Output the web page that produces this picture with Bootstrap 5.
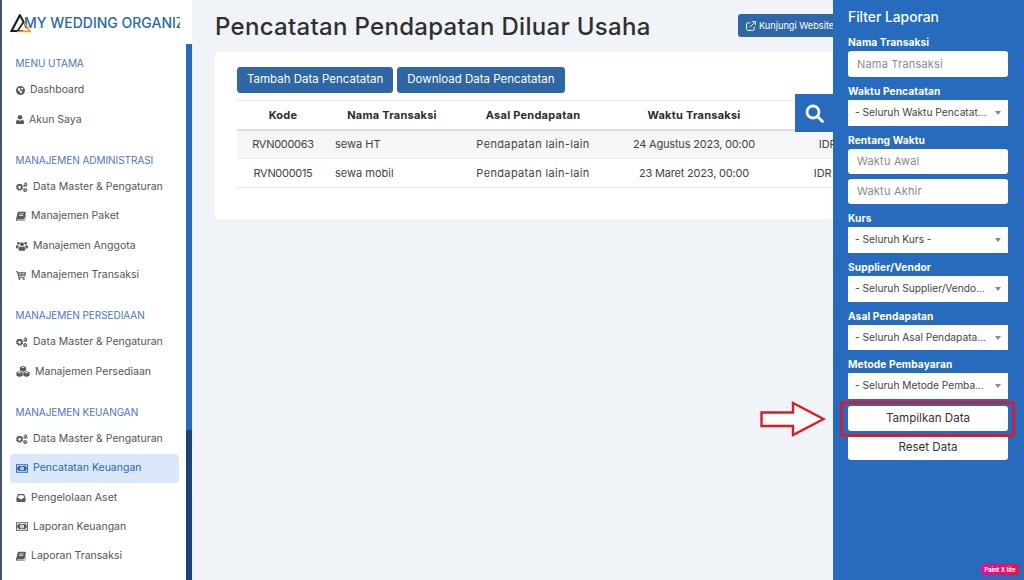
<!DOCTYPE html>
<html lang="en">
<head>
    <meta charset="UTF-8">
    <meta name="viewport" content="width=device-width, initial-scale=1.0">
    <title>Pencatatan Pendapatan Diluar Usaha</title>
    <link href="https://cdn.jsdelivr.net/npm/bootstrap@5.3.3/dist/css/bootstrap.min.css" rel="stylesheet">
    <script src="https://cdn.jsdelivr.net/npm/bootstrap@5.3.3/dist/js/bootstrap.bundle.min.js"></script>
    <style>
        html, body { height: 100%; overflow: hidden; }
        body { font-family: Inter, "Liberation Sans", sans-serif; font-size: 11px; color: #333; background: #f0f3f8; }
        .page-wrap { height: 580px; width: 1024px; position: relative; overflow: hidden; }

        .side-edge { width: 2px; background: #44546f; }
        .side-menu { width: 184px; background: #fff; }
        .side-track { width: 6px; background: #fff; padding-top: 44px; }
        .side-thumb { height: 386px; background: #266bbd; }
        .side-rest { background: #1c4474; }
        .brand-row { height: 44px; padding-left: 8px; overflow: hidden; }
        .brand-row svg { flex: none; margin-top: 1px; position: relative; z-index: 1; }
        .brand-text { font-size: 14px; font-weight: 500; color: #2a69a8; white-space: nowrap; overflow: hidden; width: 156px; margin-left: -7px; }
        .menu-head { height: 22.7px; line-height: 20.7px; padding-left: 13.5px; margin-top: 15.3px; color: #4c76c0; font-size: 10px; letter-spacing: -.05px; }
        .menu-head.first-head { margin-top: 9px; }
        .menu-item { height: 29.33px; margin: 0 7px 0 8px; padding-left: 6px; gap: 5px; border-radius: 4px; color: #555; font-size: 10.5px; text-decoration: none; }
        .menu-item svg { flex: none; fill: #5a5a5a; }
        .menu-item.on { background: #dbe7fb; color: #2a69a8; }
        .menu-item.on svg { fill: #2a69a8; }

        .main-area { min-width: 0; padding: 0 0 0 23px; }
        .title-row { height: 52px; width: 790px; }
        .page-title { font-size: 24px; font-weight: 500; color: #2f2f2f; margin: 2px 0 0; letter-spacing: .3px; white-space: nowrap; }
        .btn-site { height: 23px; width: 110px; margin-left: auto; margin-right: 157px; margin-top: -1px; padding: 0 0 0 8px; gap: 3px; background: #2f66a6; border: 0; border-radius: 3px; color: #fff; font-size: 9.2px; white-space: nowrap; overflow: hidden; }
        .data-box { width: 790px; height: 167px; background: #fff; border-radius: 4px; padding: 15px 22px; }
        .btn-blue { height: 26px; padding: 0 9px; background: #2f66a6; border: 1px solid #2f66a6; border-radius: 3px; color: #fff; font-size: 11.5px; white-space: nowrap; }
        .data-table { width: 745px; table-layout: fixed; margin: 7px 0 0; font-size: 11px; border-top: 1px solid #e9e9e9; }
        .data-table th, .data-table td { height: 29px; padding: 0 6px; vertical-align: middle; text-align: center; white-space: nowrap; overflow: hidden; border-bottom: 1px solid #e9e9e9; color: #444; }
        .data-table th { font-weight: 700; color: #2c2c2c; border-bottom: 2px solid #dedede; letter-spacing: .25px; }
        .data-table tbody tr:first-child td { background: #f6f6f6; }
        .data-table td.left-cell { text-align: left; }
        .data-table td:nth-child(1) { letter-spacing: -.3px; }
        .data-table td:nth-child(3) { letter-spacing: .35px; }
        .data-table td:nth-child(4) { letter-spacing: -.2px; }
        .w-kode { width: 92px; } .w-nama { width: 126px; } .w-asal { width: 156px; } .w-waktu { width: 166px; } .w-jumlah { width: 146px; }

        .search-tab { position: absolute; left: 795px; top: 94px; width: 38px; height: 38px; background: #266bbd; }
        .filter-panel { position: absolute; left: 833px; top: 0; width: 191px; height: 580px; background: #266bbd; padding: 7px 16px 0 15px; color: #fff; }
        .filter-title { font-size: 13.8px; font-weight: 500; line-height: 20px; margin-bottom: 8px; }
        .filter-label { display: block; font-size: 10.2px; font-weight: 700; line-height: 14px; margin: 0 0 2px; letter-spacing: .1px; color: #fff; }
        .filter-input { height: 25.75px; min-height: 0; border: 0; border-radius: 3px; font-size: 11px; padding: 0 9px; margin-bottom: 7px; }
        .filter-input.range-from { height: 25.25px; margin-bottom: 4.75px; }
        .filter-input.range-to { height: 25.25px; margin-bottom: 7.25px; }
        .filter-input::placeholder { color: #8a8a8a; letter-spacing: .2px; }
        .select-wrap { position: relative; margin-bottom: 7px; }
        .filter-select { display: block; width: 100%; height: 25.75px; border: 0; border-radius: 0; font-size: 10.2px; padding: 0 7px; background: #fff; color: #444; appearance: none; }
        .select-wrap::after { content: ""; position: absolute; right: 7px; top: 11px; border: 3.5px solid transparent; border-top: 4.5px solid #888; border-bottom: 0; }
        .btn-white { display: block; width: 100%; height: 25px; padding: 0; margin-bottom: 4px; background: #fff; border: 0; border-radius: 3px; color: #333; font-size: 11.6px; }
        .btn-white.first-btn { margin-top: 2.5px; }
        .red-box { position: absolute; left: 840px; top: 401px; width: 175px; height: 36px; border: 3px solid #cf1f35; border-radius: 2px; }
        .red-arrow { position: absolute; left: 760px; top: 401px; }
        .paint-tag { position: absolute; left: 981px; top: 564px; width: 38px; height: 11px; border-radius: 2px; background: linear-gradient(90deg, #e0109a, #ee1045); color: #fff; font-size: 6px; font-weight: 700; line-height: 11px; text-align: center; white-space: nowrap; }
    </style>
</head>
<body>
    <svg width="0" height="0" class="position-absolute">
        <symbol id="i-globe" viewBox="0 0 16 16"><path d="M8 0a8 8 0 1 0 0 16A8 8 0 0 0 8 0zm3.500 3l1.300 1.500-.6 2.200-2-.4-1.400-1.600L9.600 3zM4 4l2.500-1 1 1.200-.8 1.600L7.800 7.500l1.500 1.500 1.700.3-.5 2.200-1.800 2-1-.4-.3-2.800-2.300-1.300-1.800-2.800z" fill-rule="evenodd"/></symbol>
        <symbol id="i-user" viewBox="0 0 14 16"><circle cx="7" cy="4" r="4"/><path d="M3 8.500c1 1 2.500 1.500 4 1.500s3-.5 4-1.500c2 .3 3 2 3 4.500v1.500c0 1-.7 1.500-1.500 1.500h-11C.7 16 0 15.500 0 14.500V13c0-2.500 1-4.200 3-4.500z"/></symbol>
        <symbol id="i-cogs" viewBox="0 0 20 16"><path fill-rule="evenodd" d="M6.500 3l1 .5 1-1 1.600 1-.5 1.300.8 1 1.400-.1.400 1.900-1.300.5-.1 1.300 1.200.8-.8 1.700-1.300-.4-1 .9.200 1.400-1.800.4-.6-1.300H5.300l-.6 1.300-1.800-.5.200-1.400-1-.9-1.300.5-.8-1.700 1.200-.8-.1-1.300L-.2 7.600l.4-1.900 1.400.1.800-1L1.900 3.500l1.600-1 1 1zM6 6.200a2.300 2.300 0 1 0 0 4.600 2.300 2.300 0 0 0 0-4.600z"/><path fill-rule="evenodd" d="M16 0l.9.400-.2 1 .7.500 1-.3.500.9-.8.700.1.800 1 .4-.2 1-1 .1-.5.700.5 1-.9.500-.8-.7-.8.100-.5.900-1-.3.100-1-.6-.6-1 .2-.3-1 .9-.5v-.9l-.9-.6.400-.9 1 .2.600-.5L15 .1zm-.5 2.400a1.200 1.200 0 1 0 0 2.400 1.200 1.200 0 0 0 0-2.400zM16 9.500l.9.300-.1 1 .6.500 1-.2.400.9-.8.600.1.800.9.500-.3 1-1-.1-.6.700.3 1-.9.400-.7-.8h-.8l-.6.800-1-.4.200-1-.6-.6-1 .1-.3-1 .9-.5v-.8l-.8-.7.400-.9 1 .3.600-.5.100-1zm-.5 2.400a1.200 1.200 0 1 0 0 2.400 1.200 1.200 0 0 0 0-2.400z"/></symbol>
        <symbol id="i-book" viewBox="0 0 16 16"><path d="M4 1h10.500c1 0 1.500.7 1.300 1.600L13.500 12c-.3 1-1 1.500-2 1.500H2.500c-.7 0-1 .4-1 .8s.3.700 1 .7h10.300c.5 0 .8-.3 1-.8l2.200-9.200c.5.300.6.800.5 1.300l-2.100 8.600c-.2.800-.9 1.100-1.600 1.100H2.500C1 16 0 15 0 13.500c0-.3 0-.6.100-.9L2.500 3C2.800 1.700 3.200 1 4 1zm1.500 3l-.3 1H12l.3-1zm-.7 2.500l-.3 1h6.800l.3-1z" fill-rule="evenodd"/></symbol>
        <symbol id="i-users" viewBox="0 0 20 16"><circle cx="10" cy="5" r="3.200"/><circle cx="4" cy="3.500" r="2.300"/><circle cx="16" cy="3.500" r="2.300"/><path d="M5.500 9.500c.8-.7 1.200-.8 2-.6.700.4 1.500.6 2.500.6s1.800-.2 2.500-.6c.8-.2 1.200-.1 2 .6 1 1 1.300 2.500 1.300 4 0 1.500-1 2.500-2.300 2.500H6.500c-1.300 0-2.300-1-2.300-2.500 0-1.500.3-3 1.300-4z"/><path d="M3.800 7c.2 1 .7 1.500 1.200 1.800C3.800 9.600 3.300 11 3.200 12H1.500C.5 12 0 11.300 0 10.300 0 8.500.5 6.500 1.500 6.500c.7.400 1.500.6 2.300.5zM16.200 7c-.2 1-.7 1.500-1.200 1.800 1.200.8 1.700 2.200 1.800 3.200h1.700c1 0 1.500-.7 1.500-1.700 0-1.800-.5-3.800-1.500-3.800-.7.400-1.500.6-2.300.5z"/></symbol>
        <symbol id="i-cart" viewBox="0 0 16 16"><path fill-rule="evenodd" d="M0 2h3l.4 1.500H16l-1 6.500H5.200l.3 1.500H14V13H4L2 3.500H0zm4.700 3l.2 1h3V5zm4.300 0v1h4.600l.1-1zM5.100 7l.2 1.500H8V7zM9 7v1.500h4.300l.2-1.500z"/><circle cx="5.500" cy="14.500" r="1.500"/><circle cx="12.500" cy="14.500" r="1.500"/></symbol>
        <symbol id="i-cubes" viewBox="0 0 20 16"><path d="M10 0l4.500 1.700v5L10 8.500 5.500 6.700v-5zM7.500 2.300L10 3.300l2.500-1L10 1.300z" fill-rule="evenodd"/><path d="M5 7.500l4.500 1.700v5L5 16 .5 14.200v-5zM2.500 9.800L5 10.800l2.500-1L5 8.800z" fill-rule="evenodd"/><path d="M15 7.500l4.500 1.700v5L15 16l-4.500-1.800v-5zm-2.500 2.300l2.500 1 2.500-1-2.500-1z" fill-rule="evenodd"/></symbol>
        <symbol id="i-money" viewBox="0 0 20 14"><path fill-rule="evenodd" d="M0 0h20v14H0zm1.500 1.500v11h17v-11zM4 3h12c0 1.100.9 2 2 2v4c-1.100 0-2 .9-2 2H4c0-1.100-.9-2-2-2V5c1.100 0 2-.9 2-2zm6 .7a3.300 3.300 0 1 0 0 6.600 3.300 3.300 0 0 0 0-6.600z"/><path d="M9 5.500l1.500-.5v4H9.300V6.300L9 6.400z"/></symbol>
        <symbol id="i-inbox" viewBox="0 0 16 14"><path fill-rule="evenodd" d="M3.500 0h9c.6 0 1 .3 1.300.8L16 7v5.500c0 .8-.7 1.500-1.500 1.500h-13C.7 14 0 13.300 0 12.500V7L2.200.8C2.500.3 2.900 0 3.500 0zm.3 2L2 7h3l1 2h4l1-2h3l-1.800-5z"/></symbol>
        <symbol id="i-ext" viewBox="0 0 16 16"><path fill="none" stroke="#fff" stroke-width="1.500" d="M13 9v4.500c0 .8-.7 1.500-1.500 1.500h-9C1.700 15 1 14.300 1 13.500v-9C1 3.700 1.700 3 2.500 3H7M6 10l8-8M9.500 1H15v5.500"/></symbol>
    </svg>

    <div class="page-wrap d-flex">
        <div class="side-edge"></div>
        <nav class="side-menu flex-shrink-0">
            <div class="brand-row d-flex align-items-center">
                <svg width="21" height="20" viewBox="0 0 21 20">
                    <path d="M10 2L1.500 18H13" fill="none" stroke="#1d1d1d" stroke-width="2.200"/>
                    <path d="M9.500 1.500L17 15" fill="none" stroke="#1d1d1d" stroke-width="2"/>
                    <path d="M7 18.300H20L13.500 9" fill="none" stroke="#e0a32e" stroke-width="1.800"/>
                    <path d="M13.500 9L7.500 18" fill="none" stroke="#1d1d1d" stroke-width="1.600"/>
                </svg>
                <span class="brand-text">MY WEDDING ORGANIZER</span>
            </div>
            <div class="menu-head first-head">MENU UTAMA</div>
            <a class="menu-item d-flex align-items-center" href="#"><svg width="9" height="9"><use href="#i-globe"/></svg><span>Dashboard</span></a>
            <a class="menu-item d-flex align-items-center" href="#"><svg width="8" height="9"><use href="#i-user"/></svg><span>Akun Saya</span></a>

            <div class="menu-head">MANAJEMEN ADMINISTRASI</div>
            <a class="menu-item d-flex align-items-center" href="#"><svg width="12" height="10"><use href="#i-cogs"/></svg><span>Data Master &amp; Pengaturan</span></a>
            <a class="menu-item d-flex align-items-center" href="#"><svg width="10" height="10"><use href="#i-book"/></svg><span>Manajemen Paket</span></a>
            <a class="menu-item d-flex align-items-center" href="#"><svg width="12" height="10"><use href="#i-users"/></svg><span>Manajemen Anggota</span></a>
            <a class="menu-item d-flex align-items-center" href="#"><svg width="10" height="10"><use href="#i-cart"/></svg><span>Manajemen Transaksi</span></a>

            <div class="menu-head">MANAJEMEN PERSEDIAAN</div>
            <a class="menu-item d-flex align-items-center" href="#"><svg width="12" height="10"><use href="#i-cogs"/></svg><span>Data Master &amp; Pengaturan</span></a>
            <a class="menu-item d-flex align-items-center" href="#"><svg width="14" height="11"><use href="#i-cubes"/></svg><span>Manajemen Persediaan</span></a>

            <div class="menu-head">MANAJEMEN KEUANGAN</div>
            <a class="menu-item d-flex align-items-center" href="#"><svg width="12" height="10"><use href="#i-cogs"/></svg><span>Data Master &amp; Pengaturan</span></a>
            <a class="menu-item on d-flex align-items-center" href="#"><svg width="12" height="9"><use href="#i-money"/></svg><span>Pencatatan Keuangan</span></a>
            <a class="menu-item d-flex align-items-center" href="#"><svg width="10" height="8"><use href="#i-inbox"/></svg><span>Pengelolaan Aset</span></a>
            <a class="menu-item d-flex align-items-center" href="#"><svg width="12" height="9"><use href="#i-money"/></svg><span>Laporan Keuangan</span></a>
            <a class="menu-item d-flex align-items-center" href="#"><svg width="10" height="10"><use href="#i-book"/></svg><span>Laporan Transaksi</span></a>
        </nav>
        <div class="side-track d-flex flex-column flex-shrink-0">
            <div class="side-thumb"></div>
            <div class="side-rest flex-grow-1"></div>
        </div>

        <main class="main-area flex-grow-1">
            <div class="title-row d-flex align-items-center">
                <h1 class="page-title">Pencatatan Pendapatan Diluar Usaha</h1>
                <button class="btn-site d-flex align-items-center" type="button"><svg width="10" height="10" class="flex-shrink-0"><use href="#i-ext"/></svg>Kunjungi Website</button>
            </div>
            <div class="data-box">
                <div class="d-flex gap-1">
                    <button class="btn-blue" type="button">Tambah Data Pencatatan</button>
                    <button class="btn-blue" type="button">Download Data Pencatatan</button>
                </div>
                <table class="data-table">
                    <colgroup>
                        <col class="w-kode"><col class="w-nama"><col class="w-asal"><col class="w-waktu"><col class="w-jumlah"><col>
                    </colgroup>
                    <thead>
                        <tr><th>Kode</th><th>Nama Transaksi</th><th>Asal Pendapatan</th><th>Waktu Transaksi</th><th>Jumlah</th><th>Aksi</th></tr>
                    </thead>
                    <tbody>
                        <tr><td>RVN000063</td><td class="left-cell">sewa HT</td><td>Pendapatan lain-lain</td><td>24 Agustus 2023, 00:00</td><td>IDR 150.000</td><td></td></tr>
                        <tr><td>RVN000015</td><td class="left-cell">sewa mobil</td><td>Pendapatan lain-lain</td><td>23 Maret 2023, 00:00</td><td>IDR 1.500.000</td><td></td></tr>
                    </tbody>
                </table>
            </div>
        </main>

        <div class="search-tab d-flex align-items-center justify-content-center">
            <svg width="19" height="19" viewBox="0 0 19 19" fill="none" stroke="#fff" stroke-width="2.800"><circle cx="8" cy="8" r="6"/><path d="M12.500 12.500L17.500 17.500" stroke-linecap="round"/></svg>
        </div>

        <aside class="filter-panel">
            <div class="filter-title">Filter Laporan</div>
            <label class="filter-label">Nama Transaksi</label>
            <input class="form-control filter-input" type="text" placeholder="Nama Transaksi">
            <label class="filter-label">Waktu Pencatatan</label>
            <div class="select-wrap"><select class="filter-select"><option>- Seluruh Waktu Pencatat...</option></select></div>
            <label class="filter-label">Rentang Waktu</label>
            <input class="form-control filter-input range-from" type="text" placeholder="Waktu Awal">
            <input class="form-control filter-input range-to" type="text" placeholder="Waktu Akhir">
            <label class="filter-label">Kurs</label>
            <div class="select-wrap"><select class="filter-select"><option>- Seluruh Kurs -</option></select></div>
            <label class="filter-label">Supplier/Vendor</label>
            <div class="select-wrap"><select class="filter-select"><option>- Seluruh Supplier/Vendo...</option></select></div>
            <label class="filter-label">Asal Pendapatan</label>
            <div class="select-wrap"><select class="filter-select"><option>- Seluruh Asal Pendapata...</option></select></div>
            <label class="filter-label">Metode Pembayaran</label>
            <div class="select-wrap"><select class="filter-select"><option>- Seluruh Metode Pemba...</option></select></div>
            <button class="btn-white first-btn" type="button">Tampilkan Data</button>
            <button class="btn-white" type="button">Reset Data</button>
        </aside>

        <div class="red-box"></div>
        <svg class="red-arrow" width="66" height="36" viewBox="0 0 66 36"><path d="M1.500 11.500H33V2L63.500 18 33 34V25H1.500z" fill="#fff" stroke="#e01b24" stroke-width="2.400"/></svg>
        <div class="paint-tag">Paint X lite</div>
    </div>
</body>
</html>
